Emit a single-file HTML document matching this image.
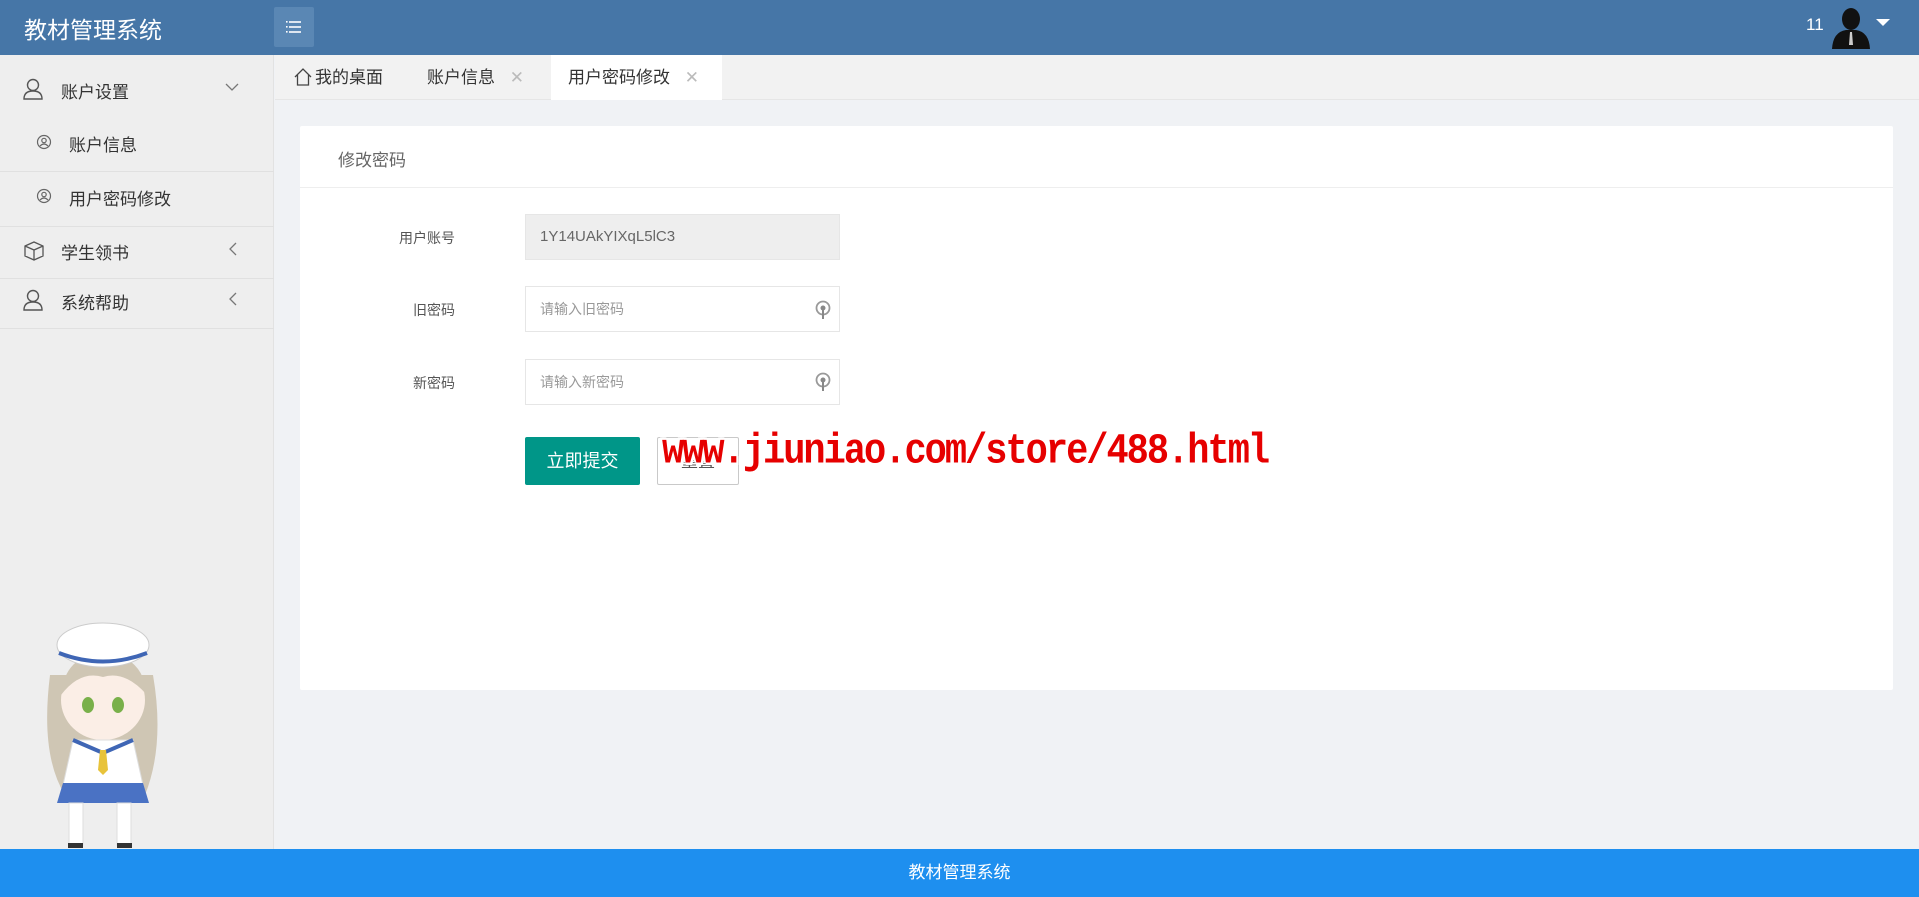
<!DOCTYPE html>
<html><head><meta charset="utf-8">
<style>
*{margin:0;padding:0;box-sizing:border-box}
body{width:1919px;height:897px;overflow:hidden;background:#f0f2f5;font-family:"Liberation Sans","Noto Sans CJK SC",sans-serif;position:relative;color:#333}
.hdr{position:absolute;left:0;top:0;width:1919px;height:55px;background:#4676a7}
.logo{position:absolute;left:24px;top:11px;color:#fff;font-size:23px}
.tog{position:absolute;left:274px;top:7px;width:40px;height:40px;background:#5a87b4;border-radius:2px}
.side{position:absolute;left:0;top:55px;width:274px;height:794px;background:#eeeeee;border-right:1px solid #e2e2e2}
.mi{position:absolute;left:0;width:274px;font-size:17px;color:#333}
.sep{position:absolute;left:0;width:274px;height:1px;background:#e0e0e0}
.tabs{position:absolute;left:275px;top:55px;width:1644px;height:45px;background:#f2f2f2;border-bottom:1px solid #e6e6e6}
.tab{position:absolute;top:0;height:45px;line-height:45px;font-size:17px;color:#333}
.card{position:absolute;left:300px;top:126px;width:1593px;height:564px;background:#fff;border-radius:2px}
.lbl{position:absolute;width:150px;left:305px;text-align:right;font-size:14px;color:#555}
.inp{position:absolute;left:525px;width:315px;height:46px;border:1px solid #e6e6e6;font-size:14px;color:#999;padding-left:14px;line-height:44px;background:#fff}
.foot{position:absolute;left:0;top:849px;width:1919px;height:48px;background:#1e8fef;color:#fff;text-align:center;line-height:48px;font-size:17px}
.wm{position:absolute;left:662px;top:428px;font-family:"Liberation Mono",monospace;font-weight:bold;font-size:37px;color:#e60000;letter-spacing:-2px;text-shadow:2px 0 #fff,-2px 0 #fff,0 2px #fff,0 -2px #fff,2px 2px #fff,-2px -2px #fff;transform:scaleY(1.15);transform-origin:left top}
</style></head><body>
<div class="hdr">
 <div class="logo">教材管理系统</div>
 <div class="tog"><svg width="40" height="40"><g stroke="#fff" stroke-width="1.6"><line x1="15" y1="15" x2="27" y2="15"/><line x1="15" y1="20" x2="27" y2="20"/><line x1="15" y1="25" x2="27" y2="25"/></g><g fill="#fff"><rect x="12" y="14" width="1.6" height="1.6"/><rect x="12" y="19" width="1.6" height="1.6"/><rect x="12" y="24" width="1.6" height="1.6"/></g></svg></div>
 <div style="position:absolute;left:1806px;top:15px;color:#fff;font-size:17px">11</div>
 <svg style="position:absolute;left:1828px;top:5px" width="46" height="44"><ellipse cx="23" cy="14" rx="9" ry="11" fill="#111"/><path d="M4 44 Q5 27 18 25 L28 25 Q41 27 42 44Z" fill="#111"/><path d="M22 27 L24 27 L25 40 L21 40Z" fill="#ccc"/></svg>
 <svg style="position:absolute;left:1875px;top:18px" width="16" height="10"><path d="M1 1 L15 1 L8 8Z" fill="#fff"/></svg>
</div>
<div class="side">
 <div class="mi" style="top:23px"><svg style="position:absolute;left:22px;top:0" width="22" height="24" fill="none" stroke="#555" stroke-width="1.4"><circle cx="11" cy="7" r="5.5"/><path d="M2 21 Q2 13 11 13 Q20 13 20 21Z"/></svg><span style="position:absolute;left:61px;top:0">账户设置</span><svg style="position:absolute;left:225px;top:4px" width="14" height="10" fill="none" stroke="#777" stroke-width="1.3"><path d="M1 2 L7 8 L13 2"/></svg></div>
 <div class="mi" style="top:76px"><svg style="position:absolute;left:36px;top:3px" width="16" height="16" fill="none" stroke="#666" stroke-width="1.2"><circle cx="8" cy="8" r="6.5"/><circle cx="8" cy="6.5" r="2.2"/><path d="M4 12 Q8 8 12 12"/></svg><span style="position:absolute;left:69px;top:0">账户信息</span></div>
 <div class="sep" style="top:116px"></div>
 <div class="mi" style="top:130px"><svg style="position:absolute;left:36px;top:3px" width="16" height="16" fill="none" stroke="#666" stroke-width="1.2"><circle cx="8" cy="8" r="6.5"/><circle cx="8" cy="6.5" r="2.2"/><path d="M4 12 Q8 8 12 12"/></svg><span style="position:absolute;left:69px;top:0">用户密码修改</span></div>
 <div class="sep" style="top:171px"></div>
 <div class="mi" style="top:184px"><svg style="position:absolute;left:22px;top:0" width="24" height="24" fill="none" stroke="#555" stroke-width="1.3"><path d="M3 7 L12 3 L21 7 L21 17 L12 21 L3 17Z M3 7 L12 11 L21 7 M12 11 L12 21"/></svg><span style="position:absolute;left:61px;top:0">学生领书</span><svg style="position:absolute;left:228px;top:3px" width="10" height="14" fill="none" stroke="#777" stroke-width="1.3"><path d="M8 1 L2 7 L8 13"/></svg></div>
 <div class="sep" style="top:223px"></div>
 <div class="mi" style="top:234px"><svg style="position:absolute;left:22px;top:0" width="22" height="24" fill="none" stroke="#555" stroke-width="1.4"><circle cx="11" cy="7" r="5.5"/><path d="M2 21 Q2 13 11 13 Q20 13 20 21Z"/></svg><span style="position:absolute;left:61px;top:0">系统帮助</span><svg style="position:absolute;left:228px;top:3px" width="10" height="14" fill="none" stroke="#777" stroke-width="1.3"><path d="M8 1 L2 7 L8 13"/></svg></div>
 <div class="sep" style="top:273px"></div>
 <svg style="position:absolute;left:25px;top:550px" width="140" height="245">
  <path d="M25 70 Q15 150 40 190 L120 190 Q140 140 128 70Z" fill="#cfc6b4"/>
  <ellipse cx="78" cy="95" rx="42" ry="40" fill="#fbeee6"/>
  <path d="M36 90 Q40 50 78 48 Q118 50 122 90 Q100 65 78 72 Q55 65 36 90Z" fill="#cfc6b4"/>
  <ellipse cx="63" cy="100" rx="6" ry="8" fill="#79b04a"/><ellipse cx="93" cy="100" rx="6" ry="8" fill="#79b04a"/>
  <ellipse cx="78" cy="40" rx="46" ry="22" fill="#fff" stroke="#ccc"/>
  <path d="M34 48 Q78 65 122 48" stroke="#3f66b5" stroke-width="4" fill="none"/>
  <path d="M48 135 L108 135 L118 180 L38 180Z" fill="#fff" stroke="#ddd"/>
  <path d="M48 135 L78 148 L108 135" stroke="#3f66b5" stroke-width="4" fill="none"/>
  <path d="M75 145 L81 145 L83 165 L78 170 L73 165Z" fill="#e8c33a"/>
  <path d="M38 178 L118 178 L124 198 L32 198Z" fill="#4a72c4"/>
  <rect x="44" y="198" width="14" height="42" fill="#fff" stroke="#ddd"/><rect x="92" y="198" width="14" height="42" fill="#fff" stroke="#ddd"/>
  <rect x="43" y="238" width="15" height="5" fill="#333"/><rect x="92" y="238" width="15" height="5" fill="#333"/>
 </svg>
</div>
<div class="tabs">
 <div class="tab" style="left:19px"><svg style="position:absolute;left:0;top:13px" width="18" height="18" fill="none" stroke="#444" stroke-width="1.3"><path d="M1 9 L9 1 L17 9 M3.5 7 L3.5 17 L14.5 17 L14.5 7"/></svg><span style="position:absolute;left:21px;white-space:nowrap">我的桌面</span></div>
 <div class="tab" style="left:152px;white-space:nowrap">账户信息 <span style="color:#bbb;margin-left:10px">✕</span></div>
 <div class="tab" style="left:276px;width:171px;background:#fff;padding-left:17px;white-space:nowrap">用户密码修改 <span style="color:#bbb;margin-left:10px">✕</span></div>
</div>
<div class="card">
 <div style="position:absolute;left:38px;top:20px;font-size:17px;color:#666">修改密码</div>
 <div style="position:absolute;left:0;top:61px;width:1593px;height:1px;background:#eee"></div>
</div>
<div class="lbl" style="top:228px">用户账号</div>
<div class="inp" style="top:214px;background:#eeeeee;color:#666;font-size:15px">1Y14UAkYIXqL5lC3</div>
<div class="lbl" style="top:300px">旧密码</div>
<div class="inp" style="top:286px">请输入旧密码</div>
<div class="lbl" style="top:373px">新密码</div>
<div class="inp" style="top:359px">请输入新密码</div>
<svg style="position:absolute;left:815px;top:299px" width="16" height="22"><circle cx="8" cy="9" r="6.5" fill="none" stroke="#999" stroke-width="1.8"/><circle cx="8" cy="9" r="2.5" fill="#888"/><path d="M8 10 L8 20" stroke="#888" stroke-width="2"/></svg>
<svg style="position:absolute;left:815px;top:371px" width="16" height="22"><circle cx="8" cy="9" r="6.5" fill="none" stroke="#999" stroke-width="1.8"/><circle cx="8" cy="9" r="2.5" fill="#888"/><path d="M8 10 L8 20" stroke="#888" stroke-width="2"/></svg>
<div style="position:absolute;left:525px;top:437px;width:115px;height:48px;background:#009688;color:#fff;border-radius:2px;text-align:center;line-height:48px;font-size:18px">立即提交</div>
<div style="position:absolute;left:657px;top:437px;width:82px;height:48px;border:1px solid #c9c9c9;border-radius:2px;text-align:center;line-height:48px;font-size:17px;color:#555">重置</div>
<div class="wm">www.jiuniao.com/store/488.html</div>
<div class="foot">教材管理系统</div>
</body></html>
